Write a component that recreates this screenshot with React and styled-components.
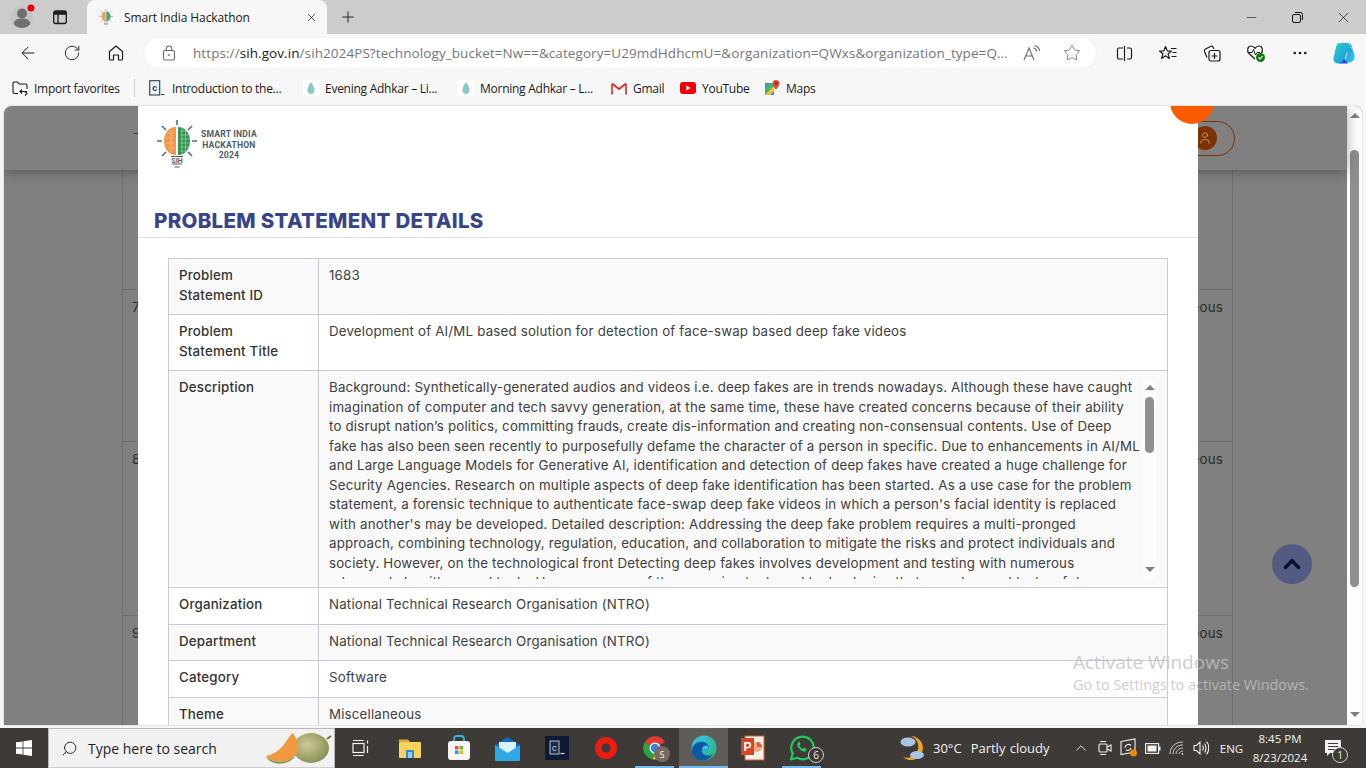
import React from 'react';
import styled, { createGlobalStyle } from 'styled-components';
import { ArrowLeft, RotateCw, Star, Plus, X, Minus, Ellipsis, ChevronUp, Search, User } from 'lucide-react';

const GlobalStyle = createGlobalStyle`
html, body { margin: 0; padding: 0; overflow: hidden; }
* { box-sizing: border-box; }
body { font-family: "Open Sans", "Liberation Sans", sans-serif; }
`;

const Screen = styled.div`
width: 1366px;
height: 768px;
display: flex;
flex-direction: column;
overflow: hidden;
background: #f7f7f7;
`;

/* browser chrome */
const TabStrip = styled.div`
height: 34px;
display: flex;
align-items: center;
background: #cccccc;
color: #1a1a1a;
`;
const StripIcon = styled.div`
width: ${p => p.$w || 38}px;
height: 34px;
display: flex;
align-items: center;
justify-content: center;
`;
const Tab = styled.div`
width: 240px;
height: 34px;
margin-left: 11px;
padding: 0 9px 0 12px;
display: flex;
align-items: center;
gap: 11px;
background: #f7f7f7;
border-radius: 8px 8px 0 0;
font-size: 12px;
letter-spacing: -0.1px;
`;
const TabTitle = styled.span`
flex: 1;
`;
const WinControls = styled.div`
margin-left: auto;
display: flex;
`;
const WinBtn = styled.div`
width: 46px;
height: 34px;
display: flex;
align-items: center;
justify-content: center;
`;
const Toolbar = styled.div`
height: 36px;
padding: 2px 0 0 6px;
display: flex;
align-items: center;
color: #1c1c1c;
`;
const ToolBtn = styled.div`
width: 44px;
height: 32px;
flex: none;
display: flex;
align-items: center;
justify-content: center;
`;
const Address = styled.div`
width: 954px;
height: 30px;
margin: 0 6px 0 6px;
padding: 0 4px 0 18px;
display: flex;
align-items: center;
background: #ffffff;
border-radius: 15px;
box-shadow: 0 0 2px rgba(0, 0, 0, 0.08);
`;
const Url = styled.div`
flex: 1;
margin-left: 17px;
font-size: 13.5px;
letter-spacing: 0.08px;
color: #767676;
white-space: nowrap;
overflow: hidden;
b { font-weight: 400; color: #1a1a1a; }
`;
const AddrIcon = styled.div`
width: 40px;
display: flex;
justify-content: center;
`;
const FavBar = styled.div`
height: 36px;
padding-left: 12px;
display: flex;
align-items: center;
font-size: 12px;
letter-spacing: -0.26px;
color: #1a1a1a;
`;
const Fav = styled.div`
display: flex;
align-items: center;
gap: ${p => p.$gap || 6}px;
margin-left: ${p => p.$ml || 0}px;
width: ${p => p.$w}px;
white-space: nowrap;
svg { flex: none; }
`;
const FavSep = styled.div`
width: 1px;
height: 18px;
margin-left: 15px;
background: #cfcfcf;
`;

/* the viewport with the dimmed page and the modal */
const Viewport = styled.div`
position: relative;
height: 619px;
margin: 0 4px;
display: flex;
overflow: hidden;
background: #808080;
border-radius: 8px 8px 0 0;
box-shadow: 0 0 2px rgba(0, 0, 0, 0.25);
`;
const BackPage = styled.div`
flex: 1;
font-family: "Inter", sans-serif;
font-size: 13.3px;
letter-spacing: 0.19px;
color: #2b2b2b;
`;
const BackHeader = styled.div`
position: relative;
height: 64px;
padding-right: 112px;
display: flex;
align-items: center;
justify-content: flex-end;
box-shadow: 0 2px 12px rgba(0, 0, 0, 0.32);
`;
const BackMark = styled.span`
position: absolute;
left: 130px;
top: 27px;
width: 4px;
height: 1px;
background: #333;
`;
const Pill = styled.div`
width: 90px;
height: 35px;
padding-right: 17px;
display: flex;
align-items: center;
justify-content: flex-end;
border: 1px solid #7c3300;
border-radius: 18px;
`;
const Avatar = styled.div`
width: 24px;
height: 24px;
display: flex;
align-items: center;
justify-content: center;
border-radius: 50%;
background: #7c3300;
color: #c9a58c;
`;
const BackTable = styled.div`
width: 1111px;
margin-left: 118px;
border-left: 1px solid #6f6f6f;
border-right: 1px solid #6f6f6f;
`;
const BackRow = styled.div`
height: ${p => p.$h}px;
padding: 9px 9px 0 9px;
display: flex;
justify-content: space-between;
border-bottom: 1px solid #6f6f6f;
`;
const Rail = styled.div`
width: 15px;
flex: none;
padding: 7px 3px 8px;
display: flex;
flex-direction: column;
align-items: center;
background: #fdfdfd;
`;
const Arrow = styled.div`
width: 0;
height: 0;
flex: none;
border-left: 5px solid transparent;
border-right: 5px solid transparent;
${p => (p.$down ? 'border-top: 5px solid #808080;' : 'border-bottom: 5px solid #808080;')}
`;
const PageThumb = styled.div`
width: 9px;
height: 437px;
margin: 32px 0 auto;
background: #8f8f8f;
border-radius: 5px;
`;

const Modal = styled.div`
position: absolute;
left: 134px;
top: 0;
bottom: 0;
width: 1060px;
overflow: hidden;
background: #ffffff;
font-family: "Inter", sans-serif;
`;
const ModalHead = styled.div`
height: 132px;
padding: 14px 16px 0 19px;
display: flex;
flex-direction: column;
justify-content: space-between;
border-bottom: 1px solid #dee2e6;
`;
const Brand = styled.div`
display: flex;
align-items: flex-start;
gap: 4px;
`;
const BrandText = styled.div`
margin-top: 9px;
font-family: "Roboto", sans-serif;
font-size: 8.6px;
font-weight: 700;
line-height: 10.6px;
text-align: center;
letter-spacing: 0.2px;
color: #4c5d68;
`;
const Heading = styled.h2`
margin: 0 0 3px -3px;
font-size: 20.5px;
line-height: 26px;
font-weight: 800;
letter-spacing: 0.3px;
color: #38448a;
`;
const DetailTable = styled.table`
width: 1000px;
margin: 20px 0 0 30px;
table-layout: fixed;
border-collapse: collapse;
font-size: 13.3px;
letter-spacing: 0.19px;
line-height: 19.5px;
color: #404040;
td { padding: 7px 10px 0; vertical-align: top; border: 1px solid #c6cbd6; }
td:first-child { width: 150px; font-weight: 450; color: #333333; }
`;
const Row = styled.tr`
height: ${p => p.$h}px;
background: ${p => (p.$alt ? '#f9f9f9' : '#ffffff')};
`;
const DescBox = styled.div`
height: 201px;
display: flex;
`;
const DescText = styled.div`
flex: 1;
overflow: hidden;
`;
const DescLine = styled.div`
white-space: nowrap;
`;
const DescRail = styled.div`
width: 13px;
margin: 1px 1px 0 0;
padding-top: 6px;
display: flex;
flex-direction: column;
align-items: center;
background: #fcfcfc;
`;
const DescThumb = styled.div`
width: 9px;
height: 56px;
margin: 7px 0 auto;
background: #8f8f8f;
border-radius: 5px;
`;
const DescArrow = styled(Arrow)`
margin-bottom: ${p => (p.$down ? 7 : 0)}px;
`;

const OrangeBall = styled.div`
position: absolute;
left: 1166px;
top: -26px;
width: 44px;
height: 44px;
display: flex;
align-items: flex-end;
justify-content: center;
padding-bottom: 15px;
border-radius: 50%;
background: #fa5c00;
color: #ffd9c2;
`;
const ToTop = styled.div`
position: absolute;
left: 1268px;
top: 438px;
width: 40px;
height: 40px;
display: flex;
align-items: center;
justify-content: center;
border-radius: 50%;
background: #525b81;
color: #071330;
`;
const Watermark = styled.div`
position: absolute;
left: 1069px;
top: 544px;
font-family: "Open Sans", sans-serif;
color: rgba(192, 192, 192, 0.8);
white-space: nowrap;
pointer-events: none;
`;
const WatermarkTitle = styled.div`
font-size: 19px;
line-height: 24px;
`;
const WatermarkSub = styled.div`
margin-top: 2px;
font-size: 14.4px;
line-height: 18px;
`;

/* windows taskbar */
const Taskbar = styled.div`
height: 40px;
margin-top: 3px;
display: flex;
align-items: stretch;
background: #3e3a37;
color: #f2f2f2;
font-size: 13px;
`;
const StartBtn = styled.div`
width: 48px;
display: flex;
align-items: center;
justify-content: center;
`;
const SearchBox = styled.div`
width: 287px;
margin-right: 1px;
padding-left: 12px;
display: flex;
align-items: center;
background: #f1f1f1;
border: 1px solid #b8b8b8;
border-bottom-color: #cfcfcf;
color: #1f1f1f;
font-size: 14px;
`;
const SearchLabel = styled.span`
margin-left: 10px;
flex: 1;
`;
const SearchGlass = styled(Search)`
transform: scaleX(-1);
`;
const TaskSlot = styled.div`
position: relative;
width: 49px;
display: flex;
align-items: center;
justify-content: center;
background: ${p => (p.$active ? '#5f5c59' : 'transparent')};
${p => p.$open && `&::after {
  content: '';
  position: absolute;
  left: ${p.$active ? 0 : 5}px;
  right: ${p.$active ? 0 : 5}px;
  bottom: 0;
  height: 2px;
  background: #76b9ed;
}`}
`;
const CountBadge = styled.span`
position: absolute;
right: ${p => p.$r || 4}px;
bottom: ${p => p.$b || 3}px;
width: 16px;
height: 16px;
display: flex;
align-items: center;
justify-content: center;
border-radius: 50%;
border: 1px solid #d0d0d0;
background: #3e3a37;
color: #f2f2f2;
font-size: 10px;
line-height: 1;
`;
const AccountBadge = styled(CountBadge)`
background: #7a685c;
border: none;
font-size: 9px;
`;
const Weather = styled.div`
margin-left: 74px;
width: 169px;
display: flex;
align-items: center;
gap: 9px;
white-space: nowrap;
`;
const WeatherText = styled.span`
word-spacing: 1px;
b { font-weight: 400; margin-right: 9px; }
`;
const Tray = styled.div`
width: 24px;
display: flex;
align-items: center;
justify-content: center;
`;
const Lang = styled.div`
width: 37px;
display: flex;
align-items: center;
justify-content: center;
font-size: 11.5px;
`;
const Clock = styled.div`
width: 60px;
display: flex;
flex-direction: column;
align-items: center;
justify-content: center;
font-size: 11.5px;
line-height: 19px;
`;
const NotifyBtn = styled.div`
position: relative;
flex: 1;
display: flex;
align-items: center;
justify-content: center;
padding-right: 10px;
`;

/* drawings */
const Profile = () => (
  <svg width="26" height="26" viewBox="0 0 26 26">
    <circle cx="13" cy="13" r="11" fill="#c4c4c4" />
    <circle cx="13" cy="9.500" r="5" fill="#6f6f6f" />
    <path d="M4.500 20c1-4.500 4.500-5.500 8.500-5.500s7.500 1 8.500 5.500a11 11 0 0 1-17 0z" fill="#6f6f6f" />
    <circle cx="22" cy="4" r="3.500" fill="#e60012" />
  </svg>
);
const TabActions = () => (
  <svg width="16" height="16" viewBox="0 0 16 16" fill="none" stroke="#1a1a1a" strokeWidth="1.300">
    <rect x="1.700" y="2" width="12.600" height="12.500" rx="2" />
    <path d="M1.700 5h12.600M6 5v9.500" />
    <rect x="2" y="2.300" width="12" height="2.500" fill="#1a1a1a" stroke="none" />
  </svg>
);
const BrainBulb = ({ size = 14 }) => (
  <svg width={size} height={size * 1.2} viewBox="0 0 40 48">
    <g stroke="#5c6b73" strokeWidth="1.600">
      <path d="M20 0v5M5 6l4 4M35 6l-4 4M0 21h5M35 21h5M5 36l4-4M35 36l-4-4" />
    </g>
    <path d="M19 7C12 7 7 13 7 21s5 14 12 14z" fill="#f4954a" />
    <path d="M21 7c7 0 12 6 12 14s-5 14-12 14z" fill="#2f9450" />
    <g stroke="#ffffff" strokeWidth="0.700" opacity="0.550">
      <path d="M23 11h7M23 15h9M23 19h10M23 23h10M23 27h9M23 31h6M25 8v26M28.500 9v24" />
    </g>
    <g stroke="#fbd2a8" strokeWidth="0.800" opacity="0.700">
      <path d="M10 13h7M9 18h8M9 23h8M11 28h6M14 10v22" />
    </g>
    <text x="20" y="42.500" textAnchor="middle" fontFamily="Roboto, sans-serif" fontSize="7" fontWeight="700" fill="#4c5d68">SIH</text>
    <path d="M14 36.500h12M15 44h10M17.500 47h5" stroke="#4c5d68" strokeWidth="1.200" />
  </svg>
);
const HomeIcon = () => (
  <svg width="18" height="18" viewBox="0 0 18 18" fill="none" stroke="#1c1c1c" strokeWidth="1.200" strokeLinejoin="round">
    <path d="M2.500 7.500 9 2l6.500 5.500V15a1 1 0 0 1-1 1h-3v-5h-5v5h-3a1 1 0 0 1-1-1z" />
  </svg>
);
const LockIcon = () => (
  <svg width="14" height="16" viewBox="0 0 14 16" fill="none" stroke="#6a6a6a" strokeWidth="1.100">
    <rect x="1.500" y="5.500" width="11" height="9.500" rx="1.500" />
    <path d="M4.200 5.500V3.800a2.800 2.800 0 0 1 5.600 0v1.700" />
    <circle cx="7" cy="10" r="0.900" fill="#6a6a6a" stroke="none" />
  </svg>
);
const ReadAloud = () => (
  <svg width="18" height="16" viewBox="0 0 18 16" fill="none" stroke="#6a6a6a" strokeWidth="1.100">
    <path d="M1 15 6 3l5 12M2.800 11h6.400" />
    <path d="M10.500 3c1.800.3 3 1.500 3.300 3.300M11.500.8c2.800.4 4.800 2.400 5.200 5.200" />
  </svg>
);
const SplitIcon = () => (
  <svg width="17" height="17" viewBox="0 0 17 17" fill="none" stroke="#1c1c1c" strokeWidth="1.200">
    <path d="M7 3H3a1.500 1.500 0 0 0-1.500 1.500v8A1.500 1.500 0 0 0 3 14h4M11 3h3a1.500 1.500 0 0 1 1.500 1.500v8A1.500 1.500 0 0 1 14 14h-3M8.500 1v15" />
  </svg>
);
const FavoritesIcon = () => (
  <svg width="18" height="17" viewBox="0 0 18 17" fill="none" stroke="#1c1c1c" strokeWidth="1.200" strokeLinejoin="round">
    <path d="M6.500 1.500 8.200 5.800l4.300.3-3.400 2.700 1.200 4.600-3.800-2.600-3.800 2.600L3.900 8.800.5 6.100l4.300-.3z" />
    <path d="M12 3.500h5.500M13.500 7.500h4M12.500 11.500h5" />
  </svg>
);
const CollectionsIcon = () => (
  <svg width="18" height="18" viewBox="0 0 18 18" fill="none" stroke="#1c1c1c" strokeWidth="1.200">
    <rect x="6" y="6.500" width="11" height="10.500" rx="2" />
    <path d="M11.500 9v6M8.500 12h6" />
    <path d="M4 13.500 1.500 7.500a2 2 0 0 1 1-2.500l5-2.500a2 2 0 0 1 2.700.800L11 5" />
  </svg>
);
const HealthIcon = () => (
  <svg width="20" height="20" viewBox="0 0 20 20" fill="none">
    <path d="M9 16 3 10.500C.5 8 1.500 3 5 3c2 0 3.200 1.200 4 2.300C9.800 4.200 11 3 13 3c3.500 0 4.500 5 2 7.500" stroke="#1c1c1c" strokeWidth="1.200" />
    <path d="M2 9.500h4l1.500-3 2 5.500 1.500-2.500h3" stroke="#1c1c1c" strokeWidth="1" />
    <circle cx="14.500" cy="14.500" r="4.500" fill="#107c10" />
    <path d="m12.500 14.500 1.500 1.500 2.500-2.800" stroke="#fff" strokeWidth="1.100" />
  </svg>
);
const CopilotIcon = () => (
  <svg width="24" height="24" viewBox="0 0 24 24">
    <defs>
      <linearGradient id="cpA" x1="0" y1="0" x2="1" y2="1">
        <stop offset="0" stopColor="#2bd0c4" />
        <stop offset="1" stopColor="#1a8be8" />
      </linearGradient>
      <linearGradient id="cpB" x1="0" y1="0" x2="1" y2="1">
        <stop offset="0" stopColor="#1f6fe8" />
        <stop offset="1" stopColor="#2fd4e6" />
      </linearGradient>
    </defs>
    <path d="M8 2h7c1.500 0 2.500 1 3 2.500L20 11c-2-1.500-4.500-1-5.500 1.500l-1.500 5C12 21 10 22.500 7 22.500 3 22.500 1 20 1.500 17.500L4 6c.5-2.500 2-4 4-4z" fill="url(#cpA)" />
    <path d="M16 2c2 0 3.500 1.500 4 4l2.500 9c.5 3-1.500 6-5 6.500H9c3 0 4.500-2 5-4l2-8c.5-1.500 2.500-2.500 4-1.500L18 4c-.3-1-1-2-2-2z" fill="url(#cpB)" />
    <path d="M7 22.500h9l-4-5-2 3.500z" fill="#1d4fd8" />
  </svg>
);
const ImportIcon = () => (
  <svg width="16" height="16" viewBox="0 0 16 16" fill="none" stroke="#1a1a1a" strokeWidth="1.100">
    <path d="M6 13.500H2.500a1.500 1.500 0 0 1-1.500-1.500V3a1 1 0 0 1 1-1h3.500l1.500 2h6.500A1.500 1.500 0 0 1 15 5.500V9" />
    <path d="M8 11.500h7M10 9.500l-2 2 2 2M13 11.500l2 2-2 2" />
  </svg>
);
const CourseIcon = () => (
  <svg width="16" height="16" viewBox="0 0 16 16" fill="none">
    <rect x="0.700" y="0.700" width="10" height="14.300" fill="#eef3f6" stroke="#20405a" strokeWidth="1.100" />
    <text x="5.700" y="11" textAnchor="middle" fontFamily="Liberation Mono, monospace" fontSize="9" fontWeight="700" fill="#20405a">c</text>
    <path d="M12 14.500h3.500" stroke="#20405a" strokeWidth="1.100" />
  </svg>
);
const DropIcon = () => (
  <svg width="16" height="16" viewBox="0 0 16 16">
    <rect width="16" height="16" fill="#ffffff" />
    <path d="M8 2c1.800 3 3.500 5 3.500 8 0 2.500-1.500 4-3.500 4s-3.500-1.500-3.500-4c0-3 1.700-5 3.500-8z" fill="#8cc4cc" />
  </svg>
);
const GmailIcon = () => (
  <svg width="16" height="13" viewBox="0 0 16 13" fill="none">
    <path d="M1 2v10.500M15 2v10.500" stroke="#d8584a" strokeWidth="2" />
    <path d="M1 1.500 8 7l7-5.500" stroke="#d93025" strokeWidth="1.800" />
  </svg>
);
const YoutubeIcon = () => (
  <svg width="16" height="12" viewBox="0 0 16 12">
    <rect width="16" height="12" rx="3" fill="#f00000" />
    <path d="M6.300 3.500v5L10.500 6z" fill="#fff" />
  </svg>
);
const MapsIcon = () => (
  <svg width="16" height="16" viewBox="0 0 16 16">
    <path d="M1 3h9v12H1z" fill="#48b565" />
    <path d="M1 15 10 6v9z" fill="#fbc02d" />
    <path d="M1 3h5L1 8z" fill="#4285f4" />
    <path d="M6 15 10 11v4z" fill="#4285f4" />
    <path d="M12 0a3.500 3.500 0 0 1 3.500 3.500C15.500 6 12 9.500 12 9.500S8.500 6 8.500 3.500A3.500 3.500 0 0 1 12 0z" fill="#e0483a" />
    <circle cx="12" cy="3.500" r="1.200" fill="#8a231a" />
  </svg>
);
const WinLogo = () => (
  <svg width="16" height="16" viewBox="0 0 16 16" fill="#ffffff">
    <path d="M0 2.300 6.600 1.400v6.200H0zM7.400 1.300 16 0v7.600H7.400zM0 8.400h6.600v6.200L0 13.700zM7.400 8.400H16V16l-8.600-1.300z" />
  </svg>
);
const Melon = () => (
  <svg width="70" height="36" viewBox="0 0 70 36">
    <defs>
      <radialGradient id="melonG" cx="0.400" cy="0.400" r="0.700">
        <stop offset="0" stopColor="#cfcb96" />
        <stop offset="1" stopColor="#7f8a4e" />
      </radialGradient>
    </defs>
    <ellipse cx="47" cy="18" rx="18" ry="15" fill="url(#melonG)" />
    <path d="M63 9l4-3" stroke="#6a7a3a" strokeWidth="2" />
    <path d="M29 3C22 8 20 22 2 26c6 8 24 8 30-2 3-8 1-16-3-21z" fill="#f2983f" />
    <path d="M2 26c6 8 24 8 30-2-4 12-26 13-30 2z" fill="#7e9a4c" />
  </svg>
);
const TaskView = () => (
  <svg width="18" height="18" viewBox="0 0 18 18" fill="none" stroke="#f2f2f2" strokeWidth="1.200">
    <rect x="1" y="4.500" width="11" height="9" />
    <path d="M1 1.500h11M1 16.500h11M15.500 1.500v3M15.500 7v7" />
  </svg>
);
const Explorer = () => (
  <svg width="24" height="22" viewBox="0 0 24 22">
    <path d="M1 2.500h9l2 2.500H1z" fill="#e3a82b" />
    <rect x="1" y="5" width="22" height="16" rx="1" fill="#fbd25a" />
    <rect x="8" y="13" width="8" height="8" fill="#2b8ed4" />
    <rect x="10" y="15" width="4" height="6" fill="#8fd0f4" />
  </svg>
);
const StoreIcon = () => (
  <svg width="24" height="26" viewBox="0 0 24 26" fill="none">
    <path d="M7 7V4a3 3 0 0 1 3-3h4a3 3 0 0 1 3 3v3" stroke="#2fb5e6" strokeWidth="1.800" />
    <rect x="1" y="6" width="22" height="19" rx="3" fill="#f5f5f5" />
    <rect x="8" y="11" width="3.500" height="3.500" fill="#e8502a" />
    <rect x="12.500" y="11" width="3.500" height="3.500" fill="#6cb52d" />
    <rect x="8" y="15.500" width="3.500" height="3.500" fill="#1c9ce8" />
    <rect x="12.500" y="15.500" width="3.500" height="3.500" fill="#f8b60f" />
  </svg>
);
const MailIcon = () => (
  <svg width="25" height="25" viewBox="0 0 25 25">
    <path d="M12.500 1 0 9v15a1 1 0 0 0 1 1h23a1 1 0 0 0 1-1V9z" fill="#0f6cbd" />
    <path d="M4 6h17v7l-8.500 5L4 13z" fill="#d8f0fc" />
    <path d="M0 9 12.500 17 25 9v15a1 1 0 0 1-1 1H1a1 1 0 0 1-1-1z" fill="#2fa8e8" />
  </svg>
);
const TerminalIcon = () => (
  <svg width="24" height="24" viewBox="0 0 24 24" fill="none">
    <rect width="24" height="24" fill="#0e1a33" />
    <rect x="5" y="5" width="9" height="13" fill="#1c2a45" stroke="#b7c3cf" strokeWidth="1" />
    <text x="9.500" y="15" textAnchor="middle" fontFamily="Liberation Mono, monospace" fontSize="9" fill="#d5dde4">c</text>
    <path d="M15.500 17.500h4" stroke="#d5dde4" strokeWidth="1.200" />
  </svg>
);
const RedRing = () => (
  <svg width="24" height="24" viewBox="0 0 24 24">
    <circle cx="12" cy="12" r="11" fill="#ee1c0e" />
    <circle cx="12" cy="12" r="4.500" fill="#3e3a37" />
  </svg>
);
const ChromeIcon = () => (
  <svg width="24" height="24" viewBox="0 0 24 24">
    <path d="M12 12 2 6a11.500 11.500 0 0 1 20 0z" fill="#e33b2e" />
    <path d="M12 12 2 6a11.500 11.500 0 0 0 8 17.500z" fill="#2ba245" />
    <path d="M12 12h10.500A11.500 11.500 0 0 1 10 23.500z" fill="#fbc02d" />
    <circle cx="12" cy="12" r="5.500" fill="#fff" />
    <circle cx="12" cy="12" r="4.300" fill="#3f7fe8" />
  </svg>
);
const EdgeIcon = () => (
  <svg width="26" height="26" viewBox="0 0 26 26">
    <defs>
      <linearGradient id="edgeA" x1="0" y1="0" x2="1" y2="1">
        <stop offset="0" stopColor="#35c1f1" />
        <stop offset="1" stopColor="#2bb673" />
      </linearGradient>
    </defs>
    <circle cx="13" cy="13" r="12.500" fill="url(#edgeA)" />
    <path d="M1 15C2 7 10 5 15 8c3 2 3.500 5 2 6.500h-6c-1 3 2 6 6 6 2 0 4-.6 5-1.300C20 23 16 25.500 12 25.500 6 25.500 .500 21 1 15z" fill="#0c59a4" />
    <path d="M11 14.500c0-2.500 2-4 4-4 1.500 0 2.500 1 2.500 2.500 0 1-.5 1.500-1.500 1.500z" fill="#35c1f1" />
  </svg>
);
const PptIcon = () => (
  <svg width="24" height="26" viewBox="0 0 24 26">
    <rect x="4" y="1" width="19" height="24" fill="#fbeee6" stroke="#d9622c" />
    <circle cx="16" cy="12" r="5" fill="#f0a583" />
    <path d="M16 12V7a5 5 0 0 1 5 5z" fill="#d9622c" />
    <rect x="0" y="3" width="13" height="17" fill="#d24726" />
    <text x="6.500" y="16" textAnchor="middle" fontFamily="Liberation Sans, sans-serif" fontSize="12" fontWeight="700" fill="#fff">P</text>
  </svg>
);
const WhatsappIcon = () => (
  <svg width="26" height="26" viewBox="0 0 26 26" fill="none">
    <path d="M2 24.500 3.700 18.500A11.300 11.300 0 1 1 8 22.800z" stroke="#21c95a" strokeWidth="2.200" strokeLinejoin="round" />
    <path d="M9 7.500c-1.500 1.500-1 4 1.500 6.500s5 3.500 6.500 2l.8-1.800-3-1.700-1.200 1.200c-1.500-.7-2.500-1.700-3.200-3.200l1.200-1.200L10.800 6.500z" fill="#21c95a" />
  </svg>
);
const WeatherIcon = () => (
  <svg width="24" height="26" viewBox="0 0 24 26">
    <path d="M11 1a12 12 0 1 1-8 21A11 11 0 0 0 11 1z" fill="#eda126" />
    <ellipse cx="8" cy="7" rx="7.500" ry="4.500" fill="#a9c4e4" />
    <ellipse cx="17" cy="20" rx="7" ry="4" fill="#a9c4e4" />
  </svg>
);
const MeetIcon = () => (
  <svg width="14" height="18" viewBox="0 0 14 18" fill="none" stroke="#f2f2f2" strokeWidth="1.100">
    <rect x="1" y="5" width="8" height="8" rx="1" />
    <path d="m9 8 4-2v6l-4-2M2 2.500h6M2 15.500h6" />
  </svg>
);
const UpdateIcon = () => (
  <svg width="18" height="20" viewBox="0 0 18 20" fill="none" stroke="#f2f2f2" strokeWidth="1.100">
    <path d="M1 3.500 15 1v13L1 16.500z" />
    <path d="M5 10a3.500 3.500 0 0 1 6-2.500M11 10a3.500 3.500 0 0 1-5 2" />
    <circle cx="13.500" cy="15" r="3.500" fill="#f08a00" stroke="none" />
  </svg>
);
const BatteryIcon = () => (
  <svg width="16" height="11" viewBox="0 0 16 11" fill="none">
    <rect x="0.600" y="0.600" width="13" height="9.800" stroke="#f2f2f2" strokeWidth="1.100" />
    <rect x="2.500" y="2.500" width="9" height="6" fill="#f2f2f2" />
    <rect x="14" y="3.500" width="1.500" height="4" fill="#f2f2f2" />
  </svg>
);
const WifiIcon = () => (
  <svg width="16" height="14" viewBox="0 0 16 14" fill="none" stroke="#cfcfcf" strokeWidth="1">
    <path d="M1 13C1 6 6 1 14 1M4 13C4 8 8 4 14 4M7 13c0-3 3-6 7-6M10 13c0-1.500 2-3 4-3" />
    <path d="M13 13h1" stroke="#f2f2f2" strokeWidth="2" />
  </svg>
);
const SpeakerIcon = () => (
  <svg width="16" height="16" viewBox="0 0 16 16" fill="none" stroke="#f2f2f2" strokeWidth="1.100">
    <path d="M1 5.500h2.500L7 2v12l-3.500-3.500H1zM9.500 5.500c1 1.500 1 3.500 0 5M11.500 3.500c2 2.500 2 6.500 0 9M13.500 1.500c3 3.500 3 9.500 0 13" />
  </svg>
);
const NotifyIcon = () => (
  <svg width="16" height="16" viewBox="0 0 16 16">
    <path d="M0 0h16v13H5l-3 3v-3H0z" fill="#f2f2f2" />
    <path d="M3 3.500h10M3 6.500h10M3 9.500h7" stroke="#3e3a37" strokeWidth="1" />
  </svg>
);

const DESCRIPTION = [
  'Background: Synthetically-generated audios and videos i.e. deep fakes are in trends nowadays. Although these have caught',
  'imagination of computer and tech savvy generation, at the same time, these have created concerns because of their ability',
  'to disrupt nation’s politics, committing frauds, create dis-information and creating non-consensual contents. Use of Deep',
  'fake has also been seen recently to purposefully defame the character of a person in specific. Due to enhancements in AI/ML',
  'and Large Language Models for Generative AI, identification and detection of deep fakes have created a huge challenge for',
  'Security Agencies. Research on multiple aspects of deep fake identification has been started. As a use case for the problem',
  "statement, a forensic technique to authenticate face-swap deep fake videos in which a person's facial identity is replaced",
  "with another's may be developed. Detailed description: Addressing the deep fake problem requires a multi-pronged",
  'approach, combining technology, regulation, education, and collaboration to mitigate the risks and protect individuals and',
  'society. However, on the technological front Detecting deep fakes involves development and testing with numerous',
  'advanced algorithms and tools. However, some of the emerging tools and technologies that are advanced tasks of de',
];

const App = () => {
  return (
    <Screen>
      <GlobalStyle />
      <TabStrip>
        <StripIcon $w={44}><Profile /></StripIcon>
        <StripIcon $w={32}><TabActions /></StripIcon>
        <Tab>
          <BrainBulb />
          <TabTitle>Smart India Hackathon</TabTitle>
          <X size={13} strokeWidth={1.4} />
        </Tab>
        <StripIcon $w={42}><Plus size={18} strokeWidth={1.2} /></StripIcon>
        <WinControls>
          <WinBtn><Minus size={15} strokeWidth={1} /></WinBtn>
          <WinBtn>
            <svg width="11" height="11" viewBox="0 0 11 11" fill="none" stroke="#1a1a1a">
              <rect x="0.500" y="2.500" width="8" height="8" rx="1.500" />
              <path d="M3 .5h5.500a2 2 0 0 1 2 2V8" />
            </svg>
          </WinBtn>
          <WinBtn><X size={17} strokeWidth={1} /></WinBtn>
        </WinControls>
      </TabStrip>

      <Toolbar>
        <ToolBtn><ArrowLeft size={20} strokeWidth={1.2} /></ToolBtn>
        <ToolBtn><RotateCw size={18} strokeWidth={1.2} /></ToolBtn>
        <ToolBtn><HomeIcon /></ToolBtn>
        <Address>
          <LockIcon />
          <Url>https://<b>sih.gov.in</b>/sih2024PS?technology_bucket=Nw==&category=U29mdHdhcmU=&organization=QWxs&organization_type=Q...</Url>
          <AddrIcon><ReadAloud /></AddrIcon>
          <AddrIcon><Star size={18} strokeWidth={1.1} color="#6a6a6a" /></AddrIcon>
        </Address>
        <ToolBtn><SplitIcon /></ToolBtn>
        <ToolBtn><FavoritesIcon /></ToolBtn>
        <ToolBtn><CollectionsIcon /></ToolBtn>
        <ToolBtn><HealthIcon /></ToolBtn>
        <ToolBtn><Ellipsis size={18} strokeWidth={1.6} /></ToolBtn>
        <ToolBtn><CopilotIcon /></ToolBtn>
      </Toolbar>

      <FavBar>
        <Fav $w={107}><ImportIcon />Import favorites</Fav>
        <FavSep />
        <Fav $ml={14} $w={140} $gap={7}><CourseIcon />Introduction to the...</Fav>
        <Fav $ml={14} $w={141}><DropIcon />Evening Adhkar – Li...</Fav>
        <Fav $ml={14} $w={139}><DropIcon />Morning Adhkar – L...</Fav>
        <Fav $ml={14} $w={55}><GmailIcon />Gmail</Fav>
        <Fav $ml={14} $w={70}><YoutubeIcon />YouTube</Fav>
        <Fav $ml={14} $w={60}><MapsIcon />Maps</Fav>
      </FavBar>

      <Viewport>
        <BackPage>
          <BackHeader>
            <BackMark />
            <Pill><Avatar><User size={14} strokeWidth={1.4} /></Avatar></Pill>
          </BackHeader>
          <BackTable>
            <BackRow $h={120} />
            <BackRow $h={152}><span>7</span><span>Miscellaneous</span></BackRow>
            <BackRow $h={174}><span>8</span><span>Miscellaneous</span></BackRow>
            <BackRow $h={110}><span>9</span><span>Miscellaneous</span></BackRow>
          </BackTable>
        </BackPage>
        <Rail>
          <Arrow />
          <PageThumb />
          <Arrow $down />
        </Rail>

        <Modal>
          <ModalHead>
            <Brand>
              <BrainBulb size={40} />
              <BrandText>SMART INDIA<br />HACKATHON<br />2024</BrandText>
            </Brand>
            <Heading>PROBLEM STATEMENT DETAILS</Heading>
          </ModalHead>
          <DetailTable>
            <tbody>
              <Row $h={56} $alt>
                <td>Problem<br />Statement ID</td>
                <td>1683</td>
              </Row>
              <Row $h={56}>
                <td>Problem<br />Statement Title</td>
                <td>Development of AI/ML based solution for detection of face-swap based deep fake videos</td>
              </Row>
              <Row $h={217} $alt>
                <td>Description</td>
                <td>
                  <DescBox>
                    <DescText>
                      {DESCRIPTION.map(line => <DescLine key={line}>{line}</DescLine>)}
                    </DescText>
                    <DescRail>
                      <DescArrow />
                      <DescThumb />
                      <DescArrow $down />
                    </DescRail>
                  </DescBox>
                </td>
              </Row>
              <Row $h={37}>
                <td>Organization</td>
                <td>National Technical Research Organisation (NTRO)</td>
              </Row>
              <Row $h={36} $alt>
                <td>Department</td>
                <td>National Technical Research Organisation (NTRO)</td>
              </Row>
              <Row $h={37}>
                <td>Category</td>
                <td>Software</td>
              </Row>
              <Row $h={37} $alt>
                <td>Theme</td>
                <td>Miscellaneous</td>
              </Row>
            </tbody>
          </DetailTable>
        </Modal>

        <OrangeBall><ChevronUp size={10} strokeWidth={2} /></OrangeBall>
        <ToTop><ChevronUp size={26} strokeWidth={3.4} /></ToTop>
        <Watermark>
          <WatermarkTitle>Activate Windows</WatermarkTitle>
          <WatermarkSub>Go to Settings to activate Windows.</WatermarkSub>
        </Watermark>
      </Viewport>

      <Taskbar>
        <StartBtn><WinLogo /></StartBtn>
        <SearchBox>
          <SearchGlass size={17} strokeWidth={1.3} />
          <SearchLabel>Type here to search</SearchLabel>
          <Melon />
        </SearchBox>
        <TaskSlot><TaskView /></TaskSlot>
        <TaskSlot><Explorer /></TaskSlot>
        <TaskSlot><StoreIcon /></TaskSlot>
        <TaskSlot><MailIcon /></TaskSlot>
        <TaskSlot><TerminalIcon /></TaskSlot>
        <TaskSlot><RedRing /></TaskSlot>
        <TaskSlot $open><ChromeIcon /><AccountBadge $r={9} $b={6}>S</AccountBadge></TaskSlot>
        <TaskSlot $open $active><EdgeIcon /></TaskSlot>
        <TaskSlot><PptIcon /></TaskSlot>
        <TaskSlot $open><WhatsappIcon /><CountBadge $r={2} $b={5}>6</CountBadge></TaskSlot>
        <Weather>
          <WeatherIcon />
          <WeatherText><b>30°C</b>Partly cloudy</WeatherText>
        </Weather>
        <Tray><ChevronUp size={18} strokeWidth={1.2} /></Tray>
        <Tray><MeetIcon /></Tray>
        <Tray><UpdateIcon /></Tray>
        <Tray><BatteryIcon /></Tray>
        <Tray><WifiIcon /></Tray>
        <Tray><SpeakerIcon /></Tray>
        <Lang>ENG</Lang>
        <Clock><span>8:45 PM</span><span>8/23/2024</span></Clock>
        <NotifyBtn><NotifyIcon /><CountBadge $r={18} $b={5}>1</CountBadge></NotifyBtn>
      </Taskbar>
    </Screen>
  );
};

export default App;
